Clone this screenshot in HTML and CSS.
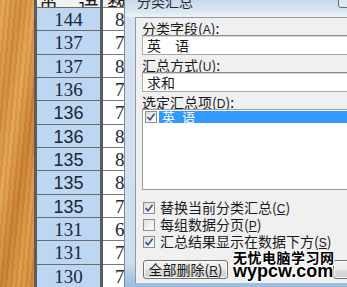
FILE: index.html
```html
<!DOCTYPE html>
<html>
<head>
<meta charset="utf-8">
<link rel="stylesheet" href="styles.css">
</head>
<body>
<div class="screen">
  <div class="wood"></div>
  <div class="sheet">
    <div class="col col-eng">
      <div class="hdr"><span>英　语</span></div>
      <div class="cell">144</div>
      <div class="cell">137</div>
      <div class="cell">137</div>
      <div class="cell">136</div>
      <div class="cell s">136</div>
      <div class="cell s">136</div>
      <div class="cell s">135</div>
      <div class="cell s">135</div>
      <div class="cell s">135</div>
      <div class="cell">131</div>
      <div class="cell">131</div>
      <div class="cell">130</div>
    </div>
    <div class="col col-math">
      <div class="hdr"><span>数</span></div>
      <div class="cell">8</div>
      <div class="cell">7</div>
      <div class="cell">8</div>
      <div class="cell">7</div>
      <div class="cell">7</div>
      <div class="cell">8</div>
      <div class="cell">8</div>
      <div class="cell">8</div>
      <div class="cell">7</div>
      <div class="cell">6</div>
      <div class="cell">7</div>
      <div class="cell">7</div>
    </div>
  </div>

  <div class="dialog">
    <div class="titlebar">
      <span class="title">分类汇总</span>
      <span class="closebtn"></span>
    </div>
    <div class="client">
      <div class="lbl">分类字段(<u>A</u>):</div>
      <div class="combo">英　语</div>
      <div class="lbl">汇总方式(<u>U</u>):</div>
      <div class="combo">求和</div>
      <div class="lbl">选定汇总项(<u>D</u>):</div>
      <div class="list">
        <div class="item">
          <span class="box checked"><svg viewBox="0 0 12 12" width="12" height="12"><path d="M2.5 6.2 L5 8.8 L9.6 2.8" fill="none" stroke="#3b5790" stroke-width="1.7"/></svg></span>
          <span class="sel">英 语</span>
        </div>
      </div>
      <div class="checks">
        <div class="chk"><span class="box checked"><svg viewBox="0 0 12 12" width="12" height="12"><path d="M2.5 6.2 L5 8.8 L9.6 2.8" fill="none" stroke="#3b5790" stroke-width="1.7"/></svg></span><span>替换当前分类汇总(<u>C</u>)</span></div>
        <div class="chk"><span class="box"></span><span>每组数据分页(<u>P</u>)</span></div>
        <div class="chk"><span class="box checked"><svg viewBox="0 0 12 12" width="12" height="12"><path d="M2.5 6.2 L5 8.8 L9.6 2.8" fill="none" stroke="#3b5790" stroke-width="1.7"/></svg></span><span>汇总结果显示在数据下方(<u>S</u>)</span></div>
      </div>
      <div class="btnrow">
        <div class="btn">全部删除(<u>R</u>)</div>
        <div class="btn">确定</div>
      </div>
    </div>
  </div>

  <div class="watermark">
    <div class="wm-cn">无忧电脑学习网</div>
    <div class="wm-en">wypcw.com</div>
  </div>
</div>
</body>
</html>
```
FILE: styles.css
```css
html, body {
  margin: 0;
  padding: 0;
  background: #fff;
}

.screen {
  position: relative;
  width: 347px;
  height: 287px;
  overflow: hidden;
  display: flex;
  font-family: "Noto Sans CJK SC", "Liberation Sans", sans-serif;
}

.wood {
  width: 34px;
  flex: none;
  background:
    repeating-linear-gradient(95deg, rgba(120, 60, 10, 0.10) 0 2px, rgba(255, 220, 160, 0.08) 2px 5px),
    linear-gradient(100deg, #e4a656 0%, #d38a3a 25%, #e3a252 42%, #c97e30 62%, #dc9946 80%, #cf8838 100%);
}

.sheet {
  display: flex;
  flex: none;
}

.col {
  display: flex;
  flex-direction: column;
}

.col-eng {
  width: 63px;
  border-left: 3px solid #5c5c5c;
  border-right: 3px solid #5c5c5c;
  background: #bdd7f3;
}

.col-math {
  width: 60px;
  background: #fff;
}

.hdr {
  height: 11px;
  overflow: hidden;
  display: flex;
  align-items: flex-end;
  background: #f2f2f2;
  color: #1e1e1e;
  font-size: 20px;
  line-height: 20px;
}

.col-eng .hdr {
  justify-content: center;
}

.col-math .hdr {
  padding-left: 4px;
}

.hdr span {
  margin-bottom: -8px;
}

.cell {
  height: 23.33px;
  box-sizing: border-box;
  border-top: 1px solid #6a6a6a;
  padding-top: 1px;
  font-family: "Liberation Serif", serif;
  font-size: 19px;
  line-height: 22px;
  color: #1b2638;
  text-align: center;
}

.cell.s {
  font-family: "Liberation Sans", sans-serif;
  font-size: 18px;
}

.col-math .cell {
  text-align: left;
  padding-left: 12px;
  border-top-color: #7a7a7a;
}

/* dialog window */
.dialog {
  position: absolute;
  left: 124px;
  top: 0;
  width: 270px;
  height: 300px;
  border-left: 1px solid #7d8a97;
  background: linear-gradient(to bottom, #d6e3f0 0, #cfdeed 262px, #9fc0e2 283px, #8fb5de 300px);
  display: flex;
  flex-direction: column;
}

.titlebar {
  position: relative;
  height: 17px;
  flex: none;
  padding-left: 12px;
  background: linear-gradient(to bottom, #c9d9ea, #dce7f2 12px, #eef3f8 17px);
}

.title {
  display: block;
  font-size: 14px;
  line-height: 14px;
  margin-top: -6px;
  color: #1e2a36;
}

.closebtn {
  position: absolute;
  left: 213px;
  top: -8px;
  width: 45px;
  height: 14px;
  border: 1px solid #5d6d7e;
  border-radius: 3px;
  background: rgba(255, 255, 255, 0.35);
}

.client {
  margin-left: 10px;
  height: 266px;
  box-sizing: border-box;
  border-left: 1px solid #8d9aa8;
  border-top: 1px solid #8d9aa8;
  background: #f0f0f0;
  padding-left: 6px;
  display: flex;
  flex-direction: column;
  font-size: 14px;
  color: #1a1a1a;
}

.lbl {
  height: 17px;
  flex: none;
  box-sizing: border-box;
  padding-top: 3px;
  line-height: 14px;
  white-space: nowrap;
}

.lbl u, .chk u, .btn u {
  font-family: "Liberation Sans", sans-serif;
  font-size: 12px;
}

.combo {
  height: 20px;
  flex: none;
  box-sizing: border-box;
  border: 1px solid #a9a9a9;
  border-top-color: #8e8e8e;
  box-shadow: inset 0 1px 0 #d6d6d6;
  background: #fff;
  padding-left: 4px;
  line-height: 18px;
  white-space: nowrap;
}

.list {
  height: 81px;
  flex: none;
  box-sizing: border-box;
  border: 1px solid #9c9c9c;
  background: #fff;
  padding: 1px 0 0 2px;
}

.item {
  display: flex;
  height: 12px;
}

.box {
  width: 12px;
  height: 12px;
  flex: none;
  box-sizing: border-box;
  border: 1px solid #8e8f8f;
  background: linear-gradient(135deg, #dcdcdc, #f6f6f6 70%, #ffffff);
  display: flex;
  align-items: center;
  justify-content: center;
}

.box svg {
  display: block;
  flex: none;
}

.sel {
  flex: 1;
  margin-left: 2px;
  background: #3399ff;
  color: #fff;
  font-size: 13px;
  line-height: 12px;
  padding-left: 3px;
  word-spacing: 4px;
  white-space: nowrap;
}

.checks {
  margin-top: 9px;
  display: flex;
  flex-direction: column;
}

.chk {
  height: 17px;
  display: flex;
  align-items: center;
  gap: 5px;
  padding-left: 1px;
  white-space: nowrap;
  line-height: 14px;
}

.chk .box {
  width: 12px;
  height: 12px;
}

.btnrow {
  margin-top: 10px;
  padding-left: 1px;
  display: flex;
  gap: 105px;
}

.btn {
  width: 85px;
  height: 19px;
  flex: none;
  box-sizing: border-box;
  border: 1px solid #707070;
  border-radius: 3px;
  background: linear-gradient(to bottom, #f3f3f3, #ebebeb 50%, #dddddd 50%, #cfcfcf);
  box-shadow: inset 0 0 0 1px #fcfcfc;
  text-align: center;
  line-height: 17px;
  white-space: nowrap;
}

/* watermark overlay */
.watermark {
  position: absolute;
  left: 233px;
  top: 250px;
  color: #000;
  font-weight: 700;
  text-shadow: 1px 1px 0 #fff, -1px -1px 0 #fff, 1px -1px 0 #fff, -1px 1px 0 #fff, 0 0 2px #fff;
  white-space: nowrap;
}

.wm-cn {
  font-family: "Noto Sans CJK SC", sans-serif;
  font-size: 14px;
  letter-spacing: 0.5px;
  line-height: 15px;
}

.wm-en {
  font-family: "Liberation Sans", sans-serif;
  font-size: 18px;
  line-height: 16px;
  margin-top: -2px;
}
```
